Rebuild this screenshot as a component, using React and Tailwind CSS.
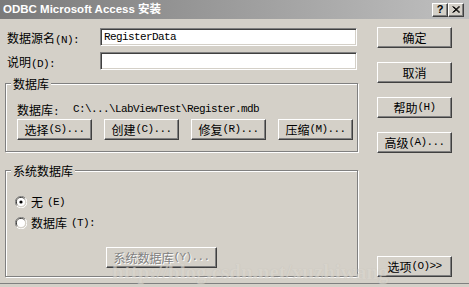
import React from 'react';

const CJK = /[\u3000-\u9fff\uff00-\uffef]/;

// split mixed text: CJK in Noto Sans CJK, latin in a narrow mono (SimSun-like half width)
const Txt = ({ t }) =>
  t
    .split(/([\u3000-\u9fff\uff00-\uffef]+)/)
    .filter(Boolean)
    .map((s, i) =>
      CJK.test(s) ? (
        <span key={i} className="font-['Noto_Sans_CJK_SC',sans-serif] text-[12px]">{s}</span>
      ) : (
        <span key={i} className="font-['Liberation_Mono',monospace] text-[11px] tracking-[-0.6px] whitespace-pre">{s}</span>
      )
    );

const raised =
  'bg-[#d4d0c8] border border-t-white border-l-white border-b-[#404040] border-r-[#404040] shadow-[inset_-1px_-1px_0_#808080]';

const sunken =
  'bg-white border border-t-[#808080] border-l-[#808080] border-b-white border-r-white shadow-[inset_1px_1px_0_#404040,inset_-1px_-1px_0_#d4d0c8]';

const Btn = ({ label, className = '', disabled = false }) => (
  <div className={`${raised} h-[21px] flex items-center justify-center leading-none ${disabled ? 'text-[#808080] [text-shadow:1px_1px_0_#fff]' : 'text-black'} ${className}`}>
    <Txt t={label} />
  </div>
);

const Group = ({ title, className = '', children }) => (
  <div className={`relative border border-[#808080] shadow-[1px_1px_0_#fff,inset_1px_1px_0_#fff] ${className}`}>
    <span className="absolute -top-[9px] left-[5px] px-[2px] bg-[#d4d0c8] leading-[16px] text-black">
      <Txt t={title} />
    </span>
    {children}
  </div>
);

const Radio = ({ checked }) => (
  <svg width="12" height="12" viewBox="0 0 12 12">
    <path d="M10.5 2.5 A5.5 5.5 0 0 0 1.5 9.5" fill="none" stroke="#808080" />
    <path d="M9.5 3.2 A4.5 4.5 0 0 0 2.3 8.6" fill="none" stroke="#404040" />
    <circle cx="6" cy="6" r="4" fill="#fff" />
    <path d="M1.8 10 A5.5 5.5 0 0 0 10.4 2.2" fill="none" stroke="#fff" />
    {checked && <circle cx="6" cy="6" r="1.6" fill="#000" />}
  </svg>
);

const TitleBar = () => (
  <div className="h-[19px] shrink-0 flex items-center bg-gradient-to-r from-[#7a7a7a] to-[#c0c0c0] pl-[3px] pr-[5px]">
    <span className="flex-1 text-white font-bold text-[11.5px] font-['Liberation_Sans','Noto_Sans_CJK_SC',sans-serif] leading-none">
      ODBC Microsoft Access 安装
    </span>
    <div className={`${raised} w-[16px] h-[14px] flex items-center justify-center text-[11px] font-bold font-['Liberation_Sans',sans-serif] leading-none`}>?</div>
    <div className={`${raised} w-[16px] h-[14px] flex items-center justify-center`}>
      <svg width="8" height="7" viewBox="0 0 8 7">
        <path d="M0.5 0.5 L7 6.5 M1.5 0.5 L8 6.5 M7 0.5 L0.5 6.5 M8 0.5 L1.5 6.5" stroke="#000" strokeWidth="1" />
      </svg>
    </div>
  </div>
);

export default function App() {
  return (
    <div className="w-[469px] h-[287px] bg-[#d4d0c8] flex flex-col relative overflow-hidden text-black select-none">
      <TitleBar />

      <div className="flex pl-[5px] pt-[9px]">
        {/* left column */}
        <div className="w-[353px] flex flex-col">
          <div className="flex items-center h-[18px]">
            <div className="w-[95px] pl-[2px] leading-none"><Txt t="数据源名(N):" /></div>
            <div className={`${sunken} w-[257px] h-[18px] flex items-center pl-[3px] leading-none`}>
              <Txt t="RegisterData" />
            </div>
          </div>
          <div className="flex items-center h-[18px] mt-[6px]">
            <div className="w-[95px] pl-[2px] leading-none"><Txt t="说明(D):" /></div>
            <div className={`${sunken} w-[257px] h-[18px]`} />
          </div>

          <Group title="数据库" className="mt-[13px] h-[69px] pl-[11px] pt-[18px]">
            <div className="flex items-center h-[14px] leading-none">
              <div className="w-[56px]"><Txt t="数据库:" /></div>
              <Txt t="C:\...\LabViewTest\Register.mdb" />
            </div>
            <div className="flex gap-[12px] mt-[3px]">
              <Btn label="选择(S)..." className="w-[75px]" />
              <Btn label="创建(C)..." className="w-[75px]" />
              <Btn label="修复(R)..." className="w-[75px]" />
              <Btn label="压缩(M)..." className="w-[75px]" />
            </div>
          </Group>

          <Group title="系统数据库" className="mt-[18px] h-[107px] pl-[9px] pt-[24px]">
            <div className="flex items-center gap-[4px] h-[14px] leading-none">
              <Radio checked />
              <Txt t="无(E)" />
            </div>
            <div className="flex items-center gap-[4px] h-[14px] mt-[7px] leading-none">
              <Radio />
              <Txt t="数据库(T):" />
            </div>
            <div className="pl-[91px] mt-[17px]">
              <Btn label="系统数据库(Y)..." className="w-[111px]" disabled />
            </div>
          </Group>
        </div>

        {/* right column */}
        <div className="ml-[19px] -mt-[1px] w-[75px] flex flex-col gap-[14px]">
          <Btn label="确定" />
          <Btn label="取消" />
          <Btn label="帮助(H)" />
          <Btn label="高级(A)..." />
          <Btn label="选项(O)>>" className="mt-auto" />
        </div>
      </div>

      <div className="absolute left-0 right-0 top-[283px] h-px bg-[#808080]" />

      {/* faint blog watermark */}
      <div className="absolute left-[112px] top-[257px] text-[21px] font-bold font-['Liberation_Serif',serif] text-[#d9d5cd] [text-shadow:0_0_1px_#bdb9b1] pointer-events-none whitespace-nowrap opacity-60">
        http://blog.csdn.net/xuzhiwang
      </div>
    </div>
  );
}
